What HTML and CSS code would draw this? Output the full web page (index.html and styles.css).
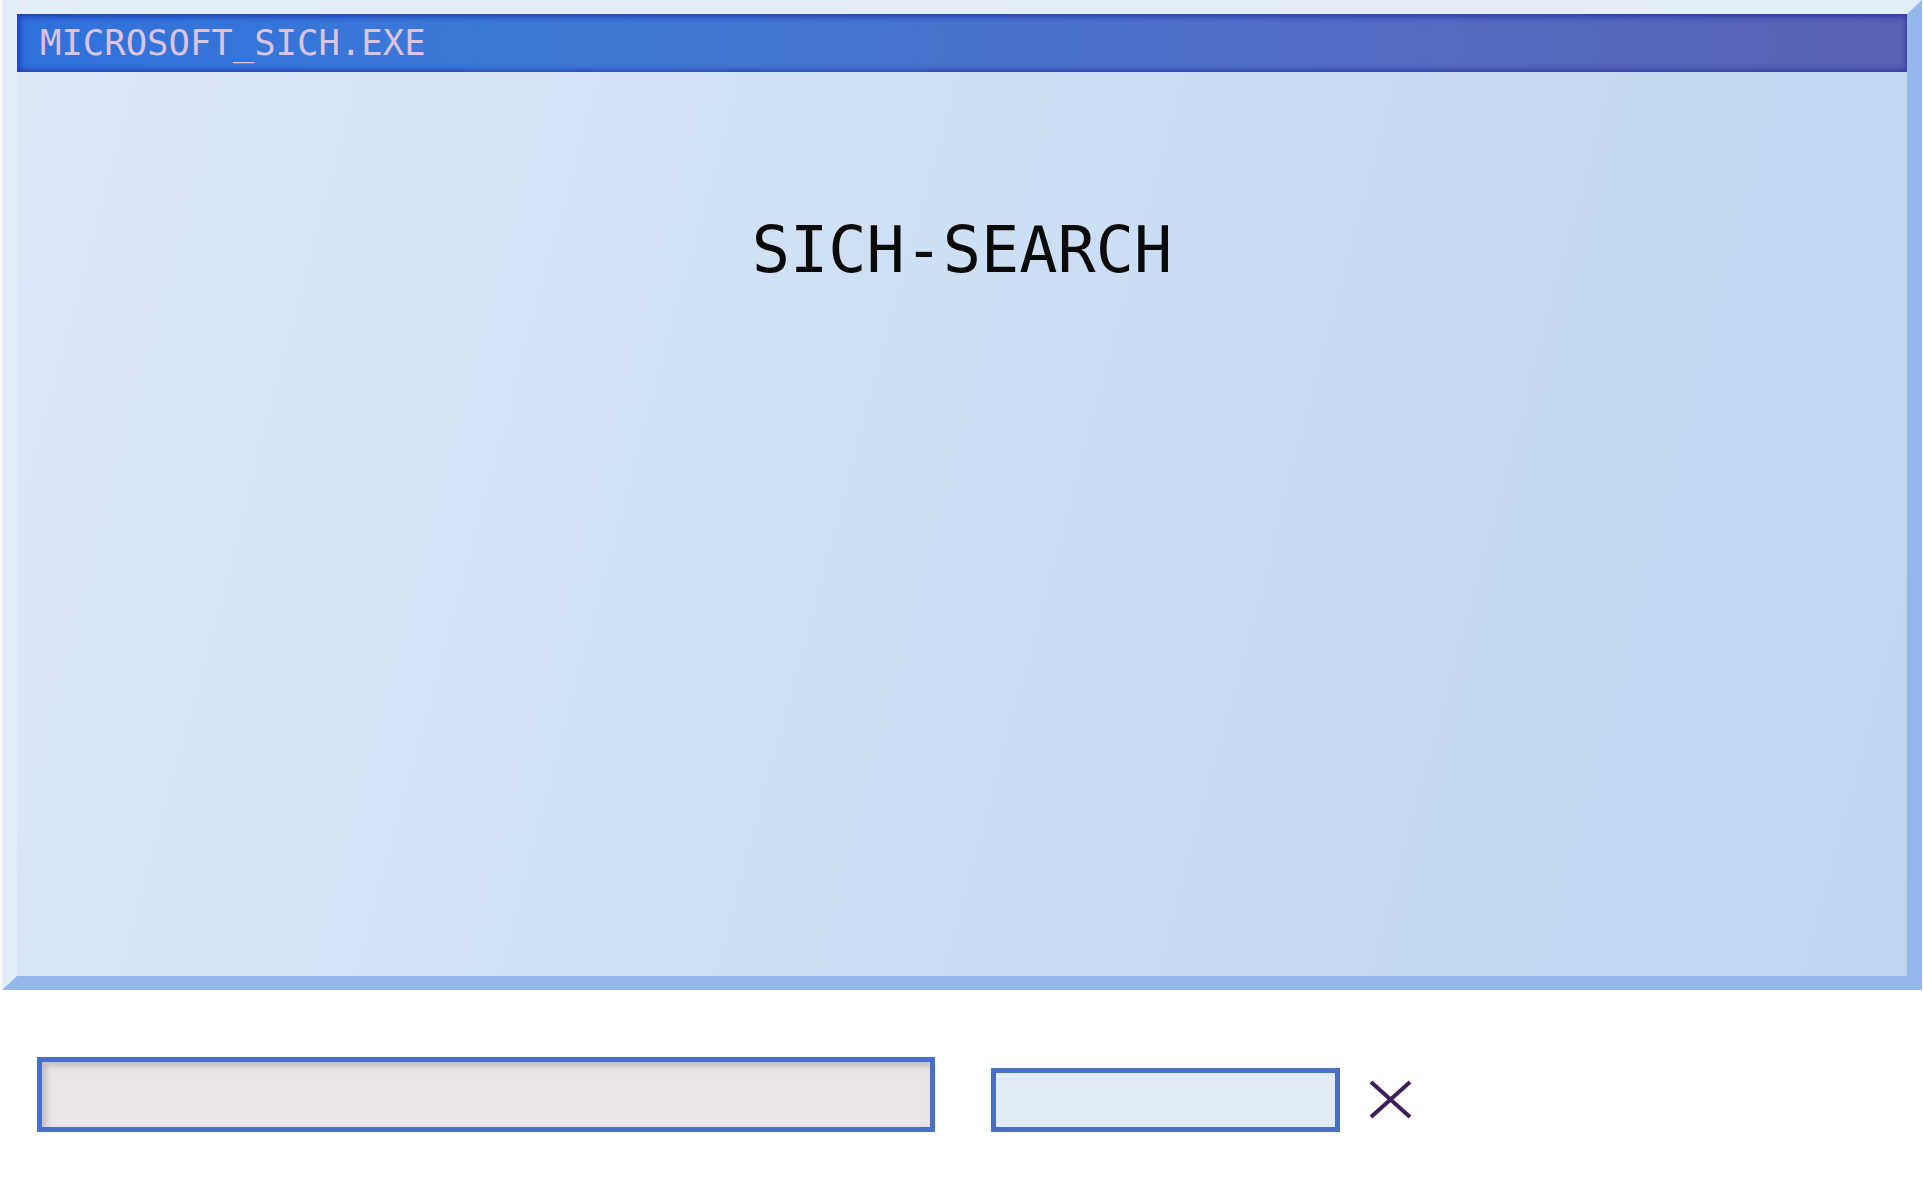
FILE: index.html
```html
<!DOCTYPE html>
<html>
<head>
<meta charset="utf-8">
<title>SICH-SEARCH</title>
<link rel="stylesheet" href="styles.css">
</head>
<body>
<div class="window">
  <div class="titlebar"><span class="title">MICROSOFT_SICH.EXE</span></div>
  <div class="content">
    <h1 class="heading">SICH-SEARCH</h1>
  </div>
</div>
<div class="searchrow">
  <input class="query" type="text" aria-label="Search">
  <input class="filter" type="text" aria-label="Filter">
  <button class="close" aria-label="Clear">
    <svg width="43" height="39" viewBox="0 0 43 39"><path d="M2 2 L41 37 M41 2 L2 37" stroke="#3d1f5a" stroke-width="4" fill="none"/></svg>
  </button>
</div>
</body>
</html>
```

FILE: styles.css
```css
html, body {
  margin: 0;
  padding: 0;
  background: #ffffff;
}
body {
  font-family: "DejaVu Sans Mono", "Liberation Mono", monospace;
}
.window {
  box-sizing: border-box;
  margin-left: 2px;
  width: 1920px;
  height: 990px;
  border-style: solid;
  border-width: 14px 15px 14px 15px;
  border-color: #e3edf8 #93b8e9 #93b8e9 #e3edf8;
  background: linear-gradient(105deg, #dde8f7 0%, #cddff4 50%, #c0d5f0 100%);
  display: flex;
  flex-direction: column;
}
.titlebar {
  height: 58px;
  display: flex;
  align-items: center;
  padding-left: 23px;
  background: linear-gradient(90deg, #2f72dc 0%, #3f7ad6 30%, #4f6fc6 65%, #5a60b2 100%);
  box-shadow: inset 0 3px 6px rgba(30, 40, 170, 0.55), inset 0 -3px 5px rgba(40, 40, 150, 0.35), inset 4px 0 6px rgba(20, 60, 190, 0.5);
}
.title {
  font-size: 35.6px;
  line-height: 1;
  color: #dcc3e0;
  letter-spacing: 0;
}
.content {
  flex: 1;
  display: flex;
  justify-content: center;
  align-items: flex-start;
}
.heading {
  margin: 147px 0 0 0;
  font-size: 63.5px;
  line-height: 1;
  font-weight: normal;
  color: #0a0a0a;
}
.searchrow {
  display: flex;
  align-items: flex-end;
  margin-top: 67px;
  padding-left: 37px;
}
.query {
  box-sizing: border-box;
  width: 898px;
  height: 75px;
  margin: 0;
  border: 5px solid #4870c8;
  background: #ebe6e6;
  box-shadow: inset 4px 4px 6px rgba(120, 110, 110, 0.35);
  outline: none;
}
.filter {
  box-sizing: border-box;
  width: 349px;
  height: 64px;
  margin: 0 0 0 56px;
  border: 5px solid #4870c8;
  background: #e2ecf7;
  outline: none;
}
.close {
  margin: 0 0 13px 29px;
  padding: 0;
  border: none;
  background: transparent;
  width: 43px;
  height: 39px;
  display: flex;
}
```
